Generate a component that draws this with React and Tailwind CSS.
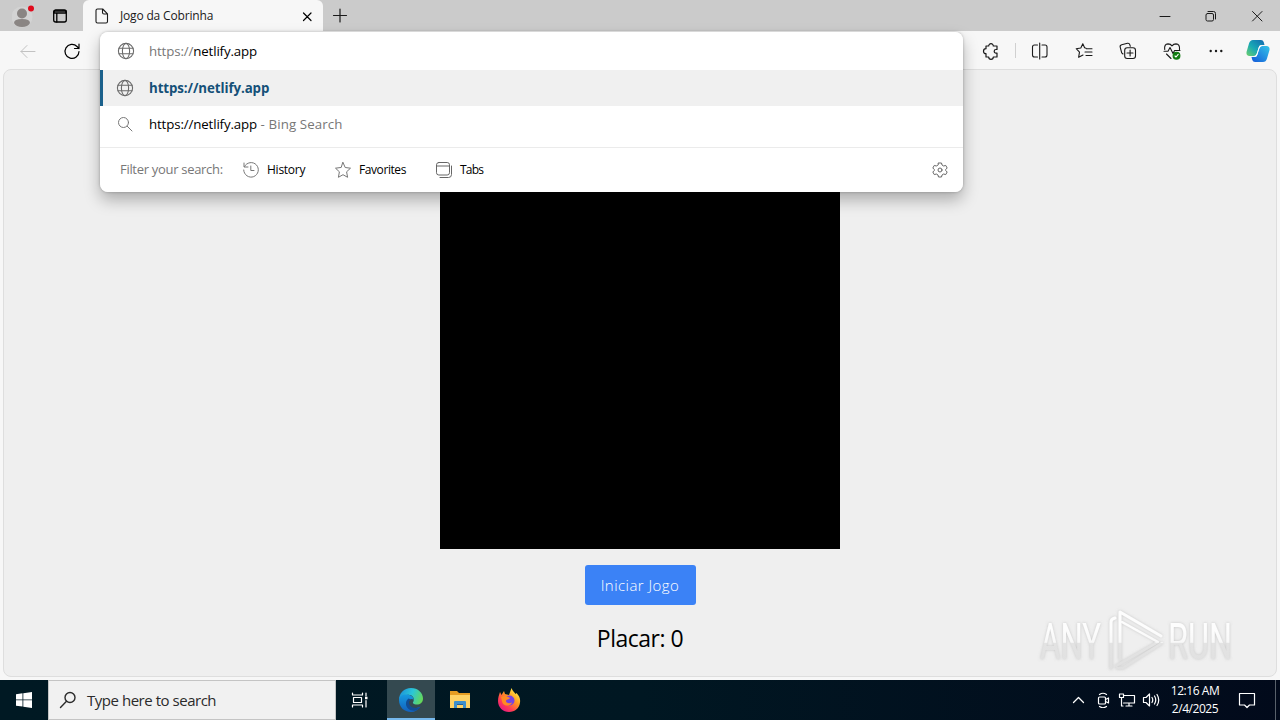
import React from "react";

const Svg = ({ size = 16, sw = 1, className = "", children }) => (
  <svg
    width={size}
    height={size}
    viewBox={`0 0 ${size} ${size}`}
    fill="none"
    stroke="currentColor"
    strokeWidth={sw}
    strokeLinecap="round"
    strokeLinejoin="round"
    className={`shrink-0 ${className}`}
  >
    {children}
  </svg>
);

const Globe = () => (
  <Svg size={18} sw={1.1} className="text-[#6b6b6b]">
    <circle cx="9" cy="9" r="7.6" />
    <ellipse cx="9" cy="9" rx="3.6" ry="7.6" />
    <path d="M2 6.3h14M2 11.7h14" />
  </Svg>
);

const TitleBar = () => (
  <div className="flex h-[31px] bg-[#cbcbcb] text-[#1a1a1a]">
    <div className="flex w-[83px] items-center pl-3">
      <svg width="24" height="26" viewBox="0 0 24 26" className="shrink-0">
        <circle cx="10" cy="14" r="10.5" fill="#d3d3d3" />
        <circle cx="10" cy="10.500" r="5" fill="#8a8583" />
        <path d="M2 20q0-4 8-4t8 4q-2 4-8 4t-8-4z" fill="#8a8583" />
        <circle cx="19" cy="5.500" r="3" fill="#e00b1c" />
      </svg>
      <Svg size={16} sw={1.3} className="ml-4 text-black">
        <rect x="1.7" y="2" width="12.6" height="12" rx="2" />
        <path d="M2 3h12v2H2zM4.8 5v9" />
      </Svg>
    </div>
    <div className="flex w-[240px] items-center rounded-t-md bg-[#f7f7f7] pl-[11px] pr-[9px]">
      <Svg size={16} sw={1.1}>
        <path d="M3.5 1h5.2L13.5 5.8v7.7q0 1.5-1.5 1.5H3.5Q2 15 2 13.5V2.5Q2 1 3.5 1zM8.5 1v3.5q0 1.5 1.5 1.5h3.5" />
      </Svg>
      <span className="ml-[10px] whitespace-nowrap text-[12px] tracking-[-0.17px]">Jogo da Cobrinha</span>
      <Svg size={14} sw={1.2} className="ml-auto text-black">
        <path d="M3.500 4l7.500 7.500M11 4l-7.500 7.500" />
      </Svg>
    </div>
    <Svg size={16} sw={1.2} className="ml-[9px] mt-2">
      <path d="M8 1v13M1.5 7.5h13" />
    </Svg>
    <div className="ml-auto flex items-center gap-[30px] pr-[15px]">
      <Svg>
        <path d="M3 8.5h10" />
      </Svg>
      <Svg>
        <rect x="3" y="5.5" width="7.5" height="7.5" rx="1.5" />
        <path d="M5 3.5h5.500q2 0 2 2v5.5" />
      </Svg>
      <Svg>
        <path d="M3.5 3.5l9.500 9.500M13 3.5L3.5 13" />
      </Svg>
    </div>
  </div>
);

const Copilot = () => (
  <svg width="24" height="24" viewBox="0 0 24 24" className="shrink-0">
    <defs>
      <linearGradient id="cpa" x1="0" y1="1" x2="1" y2="0">
        <stop offset="0" stopColor="#6fd06a" />
        <stop offset=".45" stopColor="#18a9b5" />
        <stop offset="1" stopColor="#1267b0" />
      </linearGradient>
      <linearGradient id="cpb" x1="1" y1="0" x2="0" y2="1">
        <stop offset="0" stopColor="#33c5e8" />
        <stop offset="1" stopColor="#1459d9" />
      </linearGradient>
    </defs>
    <path d="M7 1h8q2 0 2.7 2l.8 3h-3q-2 0-2.7 2.2L11 14q-.8 3-3.5 3H3q-3-.5-2.5-4L3 4.500Q4 1 7 1z" fill="url(#cpa)" />
    <path d="M17 23H9q-2 0-2.7-2l-.8-3h3q2 0 2.7-2.200L13 10q.8-3 3.5-3H21q3 .5 2.5 4L21 19.500Q20 23 17 23z" fill="url(#cpb)" />
    <path d="M14 6.5h2.500q-2.500.5-3.300 3.500l-1.700 5.500q-.8 2.500-2.700 2.500H7q3-.5 3.800-3.500L12.500 9q.5-1.800 1.500-2.500z" fill="#fff" />
  </svg>
);

const Toolbar = () => (
  <div className="flex h-[38px] items-center bg-[#f7f7f7] pt-px text-[#1a1a1a]">
    <Svg size={18} className="ml-[19px] text-[#c2c2c2]">
      <path d="M16 9.5H2M8 3.5l-6 6 6 6" />
    </Svg>
    <Svg size={18} sw={1.2} className="ml-[26px] text-black">
      <path d="M16 9.5A7 7 0 1 1 14 4.500l2 2M16 2v4.500h-4.500" />
    </Svg>
    <div className="ml-auto flex items-center pr-[10px]">
      <Svg size={18} sw={1.2}>
        <path d="M4 4h2.7a2.3 2.3 0 0 1 4.600 0H15v3.500h-1a1.800 1.800 0 0 0 0 3.600h1V15h-3.700a2.300 2.300 0 0 1-4.600 0H4v-3.300a2.500 2.500 0 0 1 0-5z" />
      </Svg>
      <div className="ml-[15px] h-[15px] w-px bg-[#d0d0d0]" />
      <Svg size={18} sw={1.1} className="ml-[15px]">
        <path d="M6.500 3H3.500Q1.500 3 1.500 5v8q0 2 2 2h3M11 3h3q2 0 2 2v8q0 2-2 2h-3M8.700 1v16" />
      </Svg>
      <Svg size={18} sw={1.1} className="ml-[26px]">
        <path d="M11 6.2L9.600 5.800 7.800 1.800 5.800 6 1.200 6.700l3.300 3.400-.9 5.200L8 13M11.500 6.700H17M10 10h7M11 13.500h6" />
      </Svg>
      <Svg size={18} sw={1.1} className="ml-[26px]">
        <path d="M4 12L2.700 10.800 1.200 5.200Q.7 3.200 2.700 2.700L8.500 1.300q1.800-.3 2.400 1.500l.4 1.500" />
        <rect x="5.7" y="5.7" width="10.8" height="10.8" rx="2.5" />
        <path d="M11.1 8v6M8 11h6" />
      </Svg>
      <Svg size={18} sw={1.1} className="ml-[26px]">
        <path d="M1.700 7.500Q1 2 5 1.900q2.700 0 4 2 1.500-2 4-2 4 .1 3.500 5.600M1 9.200h4L7 5.500l3 6 1.600-3H17M3.500 12L8 16.500" />
        <circle cx="13.5" cy="13.7" r="3.400" fill="#107c10" stroke="#107c10" />
        <path d="M12 14l1 1 2.200-2.600" stroke="#fff" />
      </Svg>
      <Svg size={18} className="ml-[26px]">
        <g fill="currentColor" stroke="none">
          <circle cx="3.7" cy="9" r="1.2" />
          <circle cx="9" cy="9" r="1.2" />
          <circle cx="14.3" cy="9" r="1.2" />
        </g>
      </Svg>
      <div className="ml-[21px]">
        <Copilot />
      </div>
    </div>
  </div>
);

const Suggestions = () => (
  <div className="absolute left-[100px] top-[32px] h-[160px] w-[863px] overflow-hidden rounded-lg bg-white text-[13.3px] text-black">
    <div className="flex h-[38px] items-center pl-[17px]">
      <Globe />
      <span className="ml-[14px] pt-px tracking-[-0.14px]">
        <span className="text-[#777]">https://</span>netlify.app
      </span>
    </div>
    <div className="flex h-9 items-center border-l-[3px] border-[#1b618c] bg-[#f0f0f0] pl-[13px]">
      <Globe />
      <span className="ml-[15px] pt-0.5 font-bold tracking-[-0.09px] text-[#155078]">https://netlify.app</span>
    </div>
    <div className="flex h-[41px] items-start pl-[17px] pt-[9px]">
      <Svg size={16} className="mt-px text-[#777]">
        <circle cx="6.5" cy="6.5" r="5" />
        <path d="M10.300 10.300l4.700 4.700" />
      </Svg>
      <span className="ml-4 whitespace-pre leading-[19px] tracking-[-0.14px]">
        https://netlify.app<span className="tracking-[0.09px] text-[#777]"> - Bing Search</span>
      </span>
    </div>
    <div className="flex h-[45px] items-center border-t border-[#ebebeb] pb-px pl-5 text-[12px]">
      <span className="w-[122px] pt-px text-[13px] tracking-[-0.3px] text-[#777]">Filter your search:</span>
      <Svg size={18} className="text-[#777]">
        <path d="M2 2v4h4M2.500 5.500A7.300 7.300 0 1 1 1.700 9M8.800 5v4.500H12" />
      </Svg>
      <span className="ml-[7px] w-[68px] tracking-[-0.25px]">History</span>
      <Svg size={18} className="-ml-px text-[#777]">
        <path d="M9 1.500l2.200 5 5.300.7-3.900 3.600 1 5.500L9 13.700l-4.600 2.600 1-5.500L1.500 7.200l5.300-.7z" />
      </Svg>
      <span className="ml-[7px] w-[76px] tracking-[-0.42px]">Favorites</span>
      <Svg size={18} className="text-[#666]">
        <rect x="1.5" y="1.5" width="13" height="12.5" rx="2.3" />
        <path d="M1.500 5h13M5 16.500h8.500q3 0 3-3V5" />
      </Svg>
      <span className="ml-[7px] tracking-[-0.8px]">Tabs</span>
      <Svg size={16} className="ml-auto mr-[15px] text-[#666]">
        <circle cx="8" cy="8" r="2" />
        <path d="M6.500 1h3l.5 2 1.700 1 2-.6 1.500 2.600L13.700 7.500v1L15.200 10l-1.500 2.600-2-.6-1.700 1-.5 2h-3L6 13l-1.700-1-2 .6L.8 10l1.500-1.500v-1L.8 6l1.500-2.600 2 .6L6 3z" />
      </Svg>
    </div>
  </div>
);

const Watermark = () => (
  <svg width="220" height="76" viewBox="0 0 220 76" className="absolute left-[1030px] top-[602px]">
    <defs>
      <linearGradient id="wm" gradientUnits="userSpaceOnUse" x1="0" y1="8" x2="0" y2="70">
        <stop offset=".3" stopColor="#fdfdfd" />
        <stop offset=".52" stopColor="#f8f8f8" />
        <stop offset=".54" stopColor="#e3e3e3" />
        <stop offset="1" stopColor="#e0e0e0" />
      </linearGradient>
      <filter id="ws" x="-10%" y="-10%" width="120%" height="120%">
        <feDropShadow dx="0" dy="0" stdDeviation="1.600" floodColor="#999" floodOpacity=".5" />
      </filter>
    </defs>
    <g filter="url(#ws)" fontFamily="Roboto, sans-serif" fontSize="50" fill="url(#wm)">
      <text x="10" y="57" textLength="61" lengthAdjust="spacingAndGlyphs">ANY</text>
      <text x="138" y="57" textLength="64" lengthAdjust="spacingAndGlyphs">RUN</text>
      <g fill="none" stroke="url(#wm)" strokeLinecap="round" strokeLinejoin="round">
        <path d="M81 66V20q0-3 4-4" strokeWidth="3" />
        <path d="M90 57V10l41 24" strokeWidth="3" />
        <path d="M92 20l36 20-42 24" strokeWidth="2.5" />
        <path d="M132 41L93 66h-6" strokeWidth="2.5" />
      </g>
    </g>
  </svg>
);

const Edge = () => (
  <svg width="24" height="24" viewBox="0 0 24 24">
    <defs>
      <linearGradient id="ea" x1="0" y1=".3" x2="1" y2=".6">
        <stop offset="0" stopColor="#1c92d9" />
        <stop offset=".5" stopColor="#2bc6d8" />
        <stop offset="1" stopColor="#65d858" />
      </linearGradient>
      <linearGradient id="eb" x1="0" y1="0" x2="0" y2="1">
        <stop offset="0" stopColor="#169ae0" />
        <stop offset="1" stopColor="#1260bd" />
      </linearGradient>
    </defs>
    <path d="M0 12C0 5 5 0 12 0s12 5 12 10.500c0 4-3 6-6 6-3.500 0-5-1.500-3.500-3C16 9 12 6 8 7S1 9 0 12z" fill="url(#ea)" />
    <path d="M0 12c0-4 4-6 8-5.500 4.500.3 7 3 6.500 5.500-1-2-5-1-5 3 0 5 6 7 12 3.500C19 22 16 24 12 24 5 24 0 19 0 12z" fill="url(#eb)" />
    <path d="M9.500 10.500c-3 2-3.500 7-.5 10 2 2 5 2.500 8 2 2-1 3.500-2 4.500-4-5 3-11 1-11.500-3.500 0-2 1-3 2-3.500z" fill="#124c93" />
  </svg>
);

const Explorer = () => (
  <svg width="22" height="20" viewBox="0 0 22 20">
    <path d="M1 1h7l2 2h11v4H1z" fill="#e69d22" />
    <path d="M1 5h20v13H1z" fill="#ffd264" />
    <path d="M5 18v-6q0-1 1-1h10q1 0 1 1v6h-3v-3H8v3z" fill="#3d8fcb" />
    <path d="M8 14h6v1H8z" fill="#265f94" />
  </svg>
);

const Firefox = () => (
  <svg width="24" height="24" viewBox="0 0 24 24">
    <defs>
      <linearGradient id="fx" x1="1" y1="0" x2=".2" y2="1">
        <stop offset=".1" stopColor="#fff44f" />
        <stop offset=".45" stopColor="#ff9a1f" />
        <stop offset=".75" stopColor="#ff3b55" />
        <stop offset="1" stopColor="#e31587" />
      </linearGradient>
    </defs>
    <path d="M3 4l1.500 3L7 3l1 3 4 1 2.500-7c1 3 3 4 4 6l1-1c3 3 4 6 3.500 9.500C22.500 20 18 24 12 24S1 19.500 1 13c0-3.500 1-6 2-9z" fill="url(#fx)" />
    <circle cx="12.5" cy="12.5" r="5" fill="#7543e3" />
    <path d="M4 9c3-2 6-1 9 1-1 2-4 1-4 3s3 3 6 1.500C14 18 8 19 5.500 15z" fill="#ff8a22" />
  </svg>
);

const Taskbar = () => (
  <div className="flex h-10 bg-gradient-to-r from-[#001923] via-[#001722] to-[#020a1b] text-white">
    <div className="flex w-12 items-center justify-center">
      <svg width="16" height="16" viewBox="0 0 16 16" fill="#fff">
        <path d="M0 2.200L6.500 1.300v6.200H0zM7.300 1.200L16 0v7.500H7.300zM0 8.300h6.500v6.300L0 13.700zM7.300 8.300H16V16l-8.700-1.300z" />
      </svg>
    </div>
    <div className="flex w-[288px] items-center border border-[#c4c4c4] bg-[#f1f1f1] pl-[10px] text-[#2b2b2b]">
      <Svg size={18} sw={1.4}>
        <circle cx="11" cy="6.5" r="5" />
        <path d="M7.500 10.300L1.500 16.500" />
      </Svg>
      <span className="ml-[10px] text-[15px] tracking-[-0.47px]">Type here to search</span>
    </div>
    <div className="flex w-[51px] items-center justify-center pr-[3px]">
      <Svg size={18} sw={1.2}>
        <path d="M1.500 2v2h10V2M1.500 16v-2h10v2M2.500 6.500h8v5h-8zM15 2v3M15 9.500V16" />
        <path d="M14 7h2.500" strokeWidth="2.5" strokeLinecap="butt" />
      </Svg>
    </div>
    <div className="flex w-12 items-center justify-center border-b-2 border-[#76b9ed] bg-[#344950] pt-0.5">
      <Edge />
    </div>
    <div className="flex w-[50px] items-center justify-center">
      <Explorer />
    </div>
    <div className="flex w-12 items-center justify-center">
      <Firefox />
    </div>
    <div className="ml-auto flex items-center">
      <Svg size={14} sw={1.3}>
        <path d="M2.500 9.500l5-5 5 5" />
      </Svg>
      <Svg size={16} sw={1.2} className="ml-[10px]">
        <rect x="3.500" y="5" width="7" height="7" rx="1" />
        <path d="M10.500 7.500l3-1.500v5l-3-1.500M4.500 2.500q3.500-2.500 7 0M4.500 14.500q3.500 2.500 7 0" />
      </Svg>
      <Svg size={18} sw={1.2} className="ml-[7px]">
        <path d="M6 4.500h10.500v7.500h-11M11 12v3M8 15h6M1.500 3h4v3.500h-4zM3.500 6.500V15H5" />
      </Svg>
      <Svg size={18} sw={1.2} className="ml-[6px]">
        <path d="M1.500 6.500h2.500L7.500 3v12L4 11.500H1.500zM10 6.500q1.500 2.500 0 5M12.500 5q2.500 4 0 8M15 3.500q3.500 5.500 0 11" />
      </Svg>
      <div className="ml-[7px] w-[56px] whitespace-nowrap text-center text-[12px] leading-[18px] tracking-[-0.45px]">
        <div>12:16 AM</div>
        <div>2/4/2025</div>
      </div>
      <Svg size={18} sw={1.2} className="ml-[15px]">
        <path d="M1.500 2.500h15V14h-5L9 16.500 6.500 14h-5z" />
      </Svg>
      <div className="ml-[19px] h-10 w-[5px] border-l border-[#59616b]" />
    </div>
  </div>
);

const App = () => {
  return (
    <div className="relative flex h-[720px] w-[1280px] flex-col overflow-hidden bg-[#f7f7f7] font-['Open_Sans','Noto_Sans',sans-serif]">
      <TitleBar />
      <Toolbar />
      <main className="mx-[3px] mb-[3px] flex flex-1 flex-col items-center rounded-lg border border-[#dedede] bg-[#efefef] pt-[79px]">
        <div className="h-[400px] w-[400px] bg-black" />
        <button className="mt-4 h-10 w-[111px] rounded-[3px] bg-[#3b82f6] text-[15px] font-light tracking-[0.45px] text-white">
          Iniciar Jogo
        </button>
        <div className="mt-[15px] text-[23px] leading-9 tracking-[-0.5px] text-black">Placar: 0</div>
      </main>
      <Taskbar />
      <div className="absolute left-[100px] top-[32px] h-[160px] w-[863px] rounded-lg shadow-[0_8px_16px_rgba(0,0,0,0.28),0_0_3px_rgba(0,0,0,0.25)]" />
      <Suggestions />
      <Watermark />
    </div>
  );
};

export default App;
